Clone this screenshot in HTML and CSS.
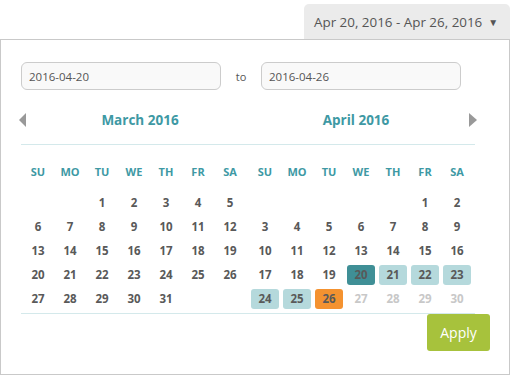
FILE: index.html
```html
<!DOCTYPE html>
<html>
<head>
<meta charset="utf-8">
<link rel="stylesheet" href="styles.css">
</head>
<body>
<div class="bar">
  <button class="range-btn">Apr 20, 2016 - Apr 26, 2016 <span class="caret">&#9660;</span></button>
</div>
<div class="popup">
  <div class="inputs">
    <input class="date-input" type="text" value="2016-04-20">
    <span class="to">to</span>
    <input class="date-input" type="text" value="2016-04-26">
  </div>
  <div class="nav">
    <span class="arrow-box"><span class="arrow arrow-left"></span></span>
    <div class="title">March 2016</div>
    <div class="title">April 2016</div>
    <span class="arrow-box end"><span class="arrow arrow-right"></span></span>
  </div>
  <div class="rule"></div>
  <div class="months">
    <div class="month">
      <div class="weekdays"><span>SU</span><span>MO</span><span>TU</span><span>WE</span><span>TH</span><span>FR</span><span>SA</span></div>
      <div class="days">
        <span class="day"></span><span class="day"></span><span class="day">1</span><span class="day">2</span><span class="day">3</span><span class="day">4</span><span class="day">5</span>
        <span class="day">6</span><span class="day">7</span><span class="day">8</span><span class="day">9</span><span class="day">10</span><span class="day">11</span><span class="day">12</span>
        <span class="day">13</span><span class="day">14</span><span class="day">15</span><span class="day">16</span><span class="day">17</span><span class="day">18</span><span class="day">19</span>
        <span class="day">20</span><span class="day">21</span><span class="day">22</span><span class="day">23</span><span class="day">24</span><span class="day">25</span><span class="day">26</span>
        <span class="day">27</span><span class="day">28</span><span class="day">29</span><span class="day">30</span><span class="day">31</span><span class="day"></span><span class="day"></span>
      </div>
    </div>
    <div class="month">
      <div class="weekdays"><span>SU</span><span>MO</span><span>TU</span><span>WE</span><span>TH</span><span>FR</span><span>SA</span></div>
      <div class="days">
        <span class="day"></span><span class="day"></span><span class="day"></span><span class="day"></span><span class="day"></span><span class="day">1</span><span class="day">2</span>
        <span class="day">3</span><span class="day">4</span><span class="day">5</span><span class="day">6</span><span class="day">7</span><span class="day">8</span><span class="day">9</span>
        <span class="day">10</span><span class="day">11</span><span class="day">12</span><span class="day">13</span><span class="day">14</span><span class="day">15</span><span class="day">16</span>
        <span class="day">17</span><span class="day">18</span><span class="day">19</span><span class="day start">20</span><span class="day in-range">21</span><span class="day in-range">22</span><span class="day in-range">23</span>
        <span class="day in-range">24</span><span class="day in-range">25</span><span class="day end">26</span><span class="day disabled">27</span><span class="day disabled">28</span><span class="day disabled">29</span><span class="day disabled">30</span>
      </div>
    </div>
  </div>
  <div class="rule rule-bottom"></div>
  <div class="footer">
    <button class="apply">Apply</button>
  </div>
</div>
</body>
</html>
```

FILE: styles.css
```css
* { box-sizing: border-box; }

body {
  margin: 0;
  background: #ffffff;
  font-family: "Open Sans", "Liberation Sans", sans-serif;
  color: #555555;
}

.bar {
  display: flex;
  justify-content: flex-end;
  padding-top: 4px;
}

.range-btn {
  width: 206px;
  height: 35px;
  border: none;
  background: #ebebeb;
  border-radius: 5px 5px 0 0;
  padding: 0 0 0 10px;
  font-family: inherit;
  font-size: 13.4px;
  color: #555555;
  text-align: left;
  display: flex;
  align-items: center;
  gap: 6px;
}

.caret {
  font-size: 10px;
  color: #555555;
  margin-top: 1px;
}

.popup {
  border: 1px solid #c9c9c9;
  padding: 22px 19px 23px 20px;
}

.inputs {
  display: flex;
  align-items: center;
  height: 28px;
}

.date-input {
  width: 200px;
  height: 28px;
  border: 1px solid #cccccc;
  border-radius: 6px;
  background: #f9f9f9;
  padding: 0 7px;
  font-family: inherit;
  font-size: 11.5px;
  color: #555555;
  outline: none;
}

.to {
  width: 40px;
  text-align: center;
  font-size: 11px;
  color: #555555;
}

.nav {
  display: flex;
  align-items: center;
  height: 48px;
  margin-top: 6px;
  margin-left: -2px;
  width: 458px;
}

.arrow-box {
  width: 13px;
  display: flex;
}

.arrow-box.end { justify-content: flex-end; }

.arrow {
  width: 0;
  height: 0;
  border-top: 7px solid transparent;
  border-bottom: 7px solid transparent;
}

.arrow-left { border-right: 7px solid #999999; }
.arrow-right { border-left: 8px solid #999999; }

.title {
  width: 216px;
  text-align: center;
  font-size: 13.5px;
  font-weight: 700;
  color: #3e99a4;
}

.rule {
  width: 454px;
  height: 1px;
  background: #d4e9eb;
}

.months {
  display: flex;
  gap: 3px;
  margin-left: 1px;
}

.weekdays,
.days {
  display: grid;
  grid-template-columns: repeat(7, 32px);
  grid-auto-rows: 24px;
}

.weekdays {
  margin-top: 15px;
  margin-bottom: 7px;
}

.weekdays span {
  text-align: center;
  line-height: 24px;
  font-size: 11px;
  font-weight: 700;
  color: #3e99a4;
}

.day {
  margin: 2px;
  border-radius: 3px;
  text-align: center;
  line-height: 20px;
  font-size: 11.5px;
  font-weight: 700;
  color: #595959;
}

.day.in-range { background: #b5d9dc; }
.day.start { background: #3f8f96; }
.day.end { background: #f49230; }
.day.disabled { color: #c8c8c8; }

.rule-bottom { margin-top: 2px; }

.footer {
  display: flex;
  justify-content: flex-end;
}

.apply {
  width: 63px;
  height: 37px;
  border: none;
  border-radius: 3px;
  background: #a7c23c;
  color: #ffffff;
  font-family: inherit;
  font-size: 14px;
  padding: 0;
}
```
